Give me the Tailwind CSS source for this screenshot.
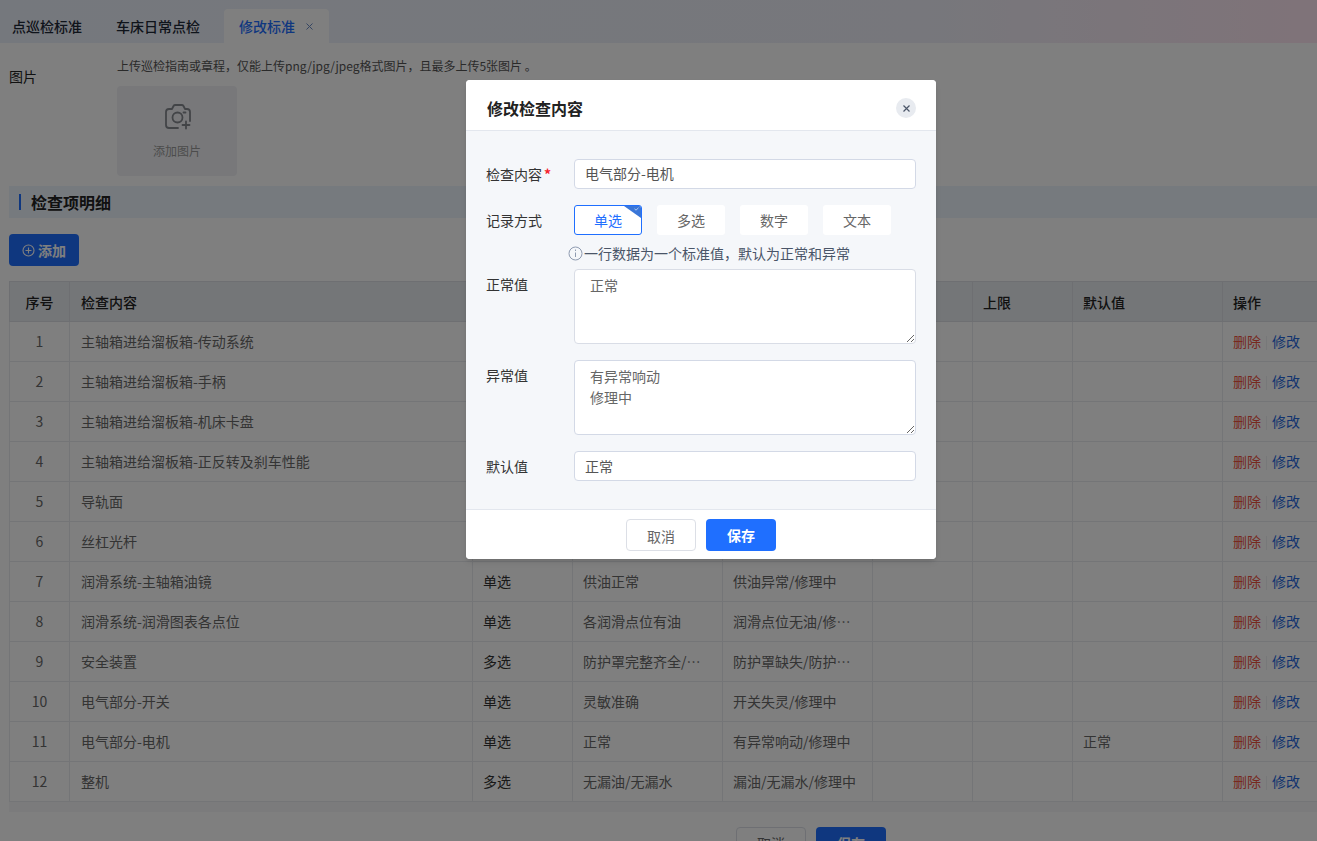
<!DOCTYPE html>
<html lang="zh">
<head>
<meta charset="utf-8">
<title>修改标准</title>
<script src="https://cdn.jsdelivr.net/npm/@tailwindcss/browser@4"></script>
</head>
<body class="h-[841px] overflow-hidden bg-white font-['Noto_Sans_CJK_SC','Noto_Sans',sans-serif] text-[14px] text-[#333]">
<div class="relative h-[841px] w-[1317px] overflow-hidden">
  <!-- tabs -->
  <div class="flex h-[43px] items-end bg-gradient-to-r from-[#ebf1fb] via-[#eeeff8] via-70% to-[#ffe6f2] pl-3">
    <div class="flex h-[34px] w-[104px] items-center font-medium text-[#1f2937]">点巡检标准</div>
    <div class="flex h-[34px] w-[108px] items-center font-medium text-[#1f2937]">车床日常点检</div>
    <div class="flex h-[34px] w-[105px] items-center rounded-t bg-white pl-[15px] font-medium text-[#1f6fff]">修改标准<svg class="ml-[11px] mt-[1px]" width="7" height="7" viewBox="0 0 7 7" stroke="#6b8ac4" stroke-width="1"><path d="M.5.5l6 6M6.500.5l-6 6"/></svg></div>
  </div>
  <!-- form -->
  <div class="pl-[9px]">
    <div class="flex h-[143px]">
      <div class="w-[108px] pt-[22px] leading-[22px] text-[#222]">图片</div>
      <div class="pt-[14px]">
        <div class="text-[12px] leading-[18px] text-[#555]">上传巡检指南或章程，仅能上传png/jpg/jpeg格式图片，且最多上传5张图片 。</div>
        <div class="mt-[11px] flex h-[90px] w-[120px] flex-col items-center rounded-sm bg-[#f0f1f5] pt-[16px] text-[12px] text-[#999]">
          <svg width="28" height="28" viewBox="0 0 28 28" fill="none" stroke="#85888f" stroke-width="1.800" stroke-linecap="round" stroke-linejoin="round"><path d="M15 26H6A3 3 0 0 1 3 23V10a3 3 0 0 1 3-3h3l1.500-3a2 2 0 0 1 1.800-1h6.400a2 2 0 0 1 1.800 1L22 7h2a3 3 0 0 1 3 3v9"/><circle cx="14.500" cy="15.500" r="5"/><path d="M23 19.500v7M19.500 23h7M20.500 10.500h2"/></svg>
          <span class="mt-[12px] leading-[18px]">添加图片</span>
        </div>
      </div>
    </div>
    <div class="flex h-[32px] items-center bg-[#edf4fd] pl-[10px]">
      <span class="h-[16px] w-[2px] bg-[#1f6fff]"></span>
      <span class="ml-[10px] text-[16px] font-bold text-[#222]">检查项明细</span>
    </div>
    <div class="mt-[16px] flex h-[32px] w-[70px] items-center justify-center gap-[3px] rounded bg-[#1f6fff] font-bold text-white">
      <svg width="13" height="13" viewBox="0 0 13 13" fill="none" stroke="#fff" stroke-width="1.100"><circle cx="6.500" cy="6.500" r="5.500"/><path d="M6.500 3.500v6M3.500 6.500h6"/></svg>
      <span>添加</span>
    </div>
    <!-- table -->
    <table class="mt-[15px] w-[1310px] table-fixed border-collapse text-[#686868]">
      <colgroup><col class="w-[60px]"><col class="w-[403px]"><col class="w-[100px]"><col class="w-[150px]"><col class="w-[150px]"><col class="w-[100px]"><col class="w-[100px]"><col class="w-[150px]"><col class="w-[97px]"></colgroup>
      <thead>
        <tr class="h-[40px] bg-[#e8ecf0] text-left font-medium text-[#222] [&>th]:border [&>th]:border-[#dcdfe5] [&>th]:px-[10px] [&>th]:pt-[2px] [&>th]:font-medium [&>th:nth-child(2)]:pl-[11px]">
          <th class="!text-center">序号</th><th>检查内容</th><th>记录方式</th><th>正常值</th><th>异常值</th><th>下限</th><th>上限</th><th>默认值</th><th>操作</th>
        </tr>
      </thead>
      <tbody class="[&_td]:h-[40px] [&_td]:border [&_td]:border-[#e8eaee] [&_td]:px-[10px] [&_td]:whitespace-nowrap [&_td]:overflow-hidden [&_td:nth-child(2)]:pl-[11px]">
        <tr><td class="text-center">1</td><td>主轴箱进给溜板箱-传动系统</td><td></td><td></td><td></td><td></td><td></td><td></td><td><span class="text-[#f0503f]">删除</span><span class="mx-[5px] inline-block h-[14px] w-px bg-[#eef0f3] align-middle"></span><span class="text-[#2468e0]">修改</span></td></tr>
        <tr><td class="text-center">2</td><td>主轴箱进给溜板箱-手柄</td><td></td><td></td><td></td><td></td><td></td><td></td><td><span class="text-[#f0503f]">删除</span><span class="mx-[5px] inline-block h-[14px] w-px bg-[#eef0f3] align-middle"></span><span class="text-[#2468e0]">修改</span></td></tr>
        <tr><td class="text-center">3</td><td>主轴箱进给溜板箱-机床卡盘</td><td></td><td></td><td></td><td></td><td></td><td></td><td><span class="text-[#f0503f]">删除</span><span class="mx-[5px] inline-block h-[14px] w-px bg-[#eef0f3] align-middle"></span><span class="text-[#2468e0]">修改</span></td></tr>
        <tr><td class="text-center">4</td><td>主轴箱进给溜板箱-正反转及刹车性能</td><td></td><td></td><td></td><td></td><td></td><td></td><td><span class="text-[#f0503f]">删除</span><span class="mx-[5px] inline-block h-[14px] w-px bg-[#eef0f3] align-middle"></span><span class="text-[#2468e0]">修改</span></td></tr>
        <tr><td class="text-center">5</td><td>导轨面</td><td></td><td></td><td></td><td></td><td></td><td></td><td><span class="text-[#f0503f]">删除</span><span class="mx-[5px] inline-block h-[14px] w-px bg-[#eef0f3] align-middle"></span><span class="text-[#2468e0]">修改</span></td></tr>
        <tr><td class="text-center">6</td><td>丝杠光杆</td><td></td><td></td><td></td><td></td><td></td><td></td><td><span class="text-[#f0503f]">删除</span><span class="mx-[5px] inline-block h-[14px] w-px bg-[#eef0f3] align-middle"></span><span class="text-[#2468e0]">修改</span></td></tr>
        <tr><td class="text-center">7</td><td>润滑系统-主轴箱油镜</td><td class="text-[#333]">单选</td><td>供油正常</td><td>供油异常/修理中</td><td></td><td></td><td></td><td><span class="text-[#f0503f]">删除</span><span class="mx-[5px] inline-block h-[14px] w-px bg-[#eef0f3] align-middle"></span><span class="text-[#2468e0]">修改</span></td></tr>
        <tr><td class="text-center">8</td><td>润滑系统-润滑图表各点位</td><td class="text-[#333]">单选</td><td>各润滑点位有油</td><td>润滑点位无油/修…</td><td></td><td></td><td></td><td><span class="text-[#f0503f]">删除</span><span class="mx-[5px] inline-block h-[14px] w-px bg-[#eef0f3] align-middle"></span><span class="text-[#2468e0]">修改</span></td></tr>
        <tr><td class="text-center">9</td><td>安全装置</td><td class="text-[#333]">多选</td><td>防护罩完整齐全/…</td><td>防护罩缺失/防护…</td><td></td><td></td><td></td><td><span class="text-[#f0503f]">删除</span><span class="mx-[5px] inline-block h-[14px] w-px bg-[#eef0f3] align-middle"></span><span class="text-[#2468e0]">修改</span></td></tr>
        <tr><td class="text-center">10</td><td>电气部分-开关</td><td class="text-[#333]">单选</td><td>灵敏准确</td><td>开关失灵/修理中</td><td></td><td></td><td></td><td><span class="text-[#f0503f]">删除</span><span class="mx-[5px] inline-block h-[14px] w-px bg-[#eef0f3] align-middle"></span><span class="text-[#2468e0]">修改</span></td></tr>
        <tr><td class="text-center">11</td><td>电气部分-电机</td><td class="text-[#333]">单选</td><td>正常</td><td>有异常响动/修理中</td><td></td><td></td><td>正常</td><td><span class="text-[#f0503f]">删除</span><span class="mx-[5px] inline-block h-[14px] w-px bg-[#eef0f3] align-middle"></span><span class="text-[#2468e0]">修改</span></td></tr>
        <tr><td class="text-center">12</td><td>整机</td><td class="text-[#333]">多选</td><td>无漏油/无漏水</td><td>漏油/无漏水/修理中</td><td></td><td></td><td></td><td><span class="text-[#f0503f]">删除</span><span class="mx-[5px] inline-block h-[14px] w-px bg-[#eef0f3] align-middle"></span><span class="text-[#2468e0]">修改</span></td></tr>
      </tbody>
    </table>
    <div class="h-[10px] bg-[#f6f6f9]"></div>
    <div class="ml-[727px] mt-[15px] flex gap-[10px]">
      <div class="flex h-[32px] w-[70px] items-center justify-center rounded-sm border border-[#dcdfe6] text-[#666]">取消</div>
      <div class="flex h-[32px] w-[70px] items-center justify-center rounded-sm bg-[#1f6fff] font-bold text-white">保存</div>
    </div>
  </div>

  <!-- overlay -->
  <div class="absolute inset-0 bg-black/50"></div>

  <!-- modal -->
  <div class="absolute left-[466px] top-[80px] flex h-[479px] w-[470px] flex-col overflow-hidden rounded bg-[#f5f7fa] shadow-md">
    <div class="flex h-[51px] shrink-0 items-center justify-between border-b border-[#e3e7ee] bg-white pl-[21px] pr-[20px] pt-[6px]">
      <span class="text-[16px] font-bold text-[#222]">修改检查内容</span>
      <span class="flex h-[20px] w-[20px] items-center justify-center rounded-full bg-[#e8ebf0]">
        <svg width="7" height="7" viewBox="0 0 7 7" stroke="#4a5568" stroke-width="1.200"><path d="M.5.5l6 6M6.500.5l-6 6"/></svg>
      </span>
    </div>
    <div class="flex-1 pl-[20px] pr-[20px] pt-[28px]">
      <div class="flex h-[30px] items-center">
        <label class="w-[88px] text-[#333]">检查内容<span class="ml-[2px] font-bold text-[#f5222d]">*</span></label>
        <div class="flex h-[30px] flex-1 items-center rounded border border-[#d3d9e6] bg-white px-[10px] pb-[2px] text-[#555]">电气部分-电机</div>
      </div>
      <div class="mt-[16px] flex h-[30px] items-center">
        <label class="w-[88px] text-[#333]">记录方式</label>
        <div class="flex gap-[15px] text-[#666]">
          <div class="relative flex h-[30px] w-[68px] items-center justify-center overflow-hidden rounded-[3px] border border-[#1f6fff] bg-white text-[#1f6fff]">单选
            <svg class="absolute right-0 top-0" width="17" height="12" viewBox="0 0 17 12"><path d="M0 0h17v12z" fill="#3a76d8"/><path d="M10.500 2.800l1.500 1.400 2.500-2.400" fill="none" stroke="#cfe0fb" stroke-width=".8"/></svg>
          </div>
          <div class="flex h-[30px] w-[68px] items-center justify-center rounded-[3px] bg-white">多选</div>
          <div class="flex h-[30px] w-[68px] items-center justify-center rounded-[3px] bg-white">数字</div>
          <div class="flex h-[30px] w-[68px] items-center justify-center rounded-[3px] bg-white">文本</div>
        </div>
      </div>
      <div class="ml-[82px] mt-[8px] flex h-[20px] items-center gap-[1px] text-[#4a5568]">
        <svg width="15" height="15" viewBox="0 0 15 15" fill="none" stroke="#8f9bb0"><circle cx="7.500" cy="7.500" r="6.500"/><path d="M7.500 6.500v4.500M7.500 3.500v1.500"/></svg>
        <span>一行数据为一个标准值，默认为正常和异常</span>
      </div>
      <div class="mt-[6px] flex">
        <label class="w-[88px] pt-[5px] leading-[20px] text-[#333]">正常值</label>
        <textarea class="h-[75px] flex-1 rounded-sm border border-[#d9dde6] bg-white px-[15px] py-[5px] leading-[21px] text-[#666]">正常</textarea>
      </div>
      <div class="mt-[16px] flex">
        <label class="w-[88px] pt-[5px] leading-[20px] text-[#333]">异常值</label>
        <textarea class="h-[75px] flex-1 rounded-sm border border-[#d3d9e6] bg-white px-[15px] py-[5px] leading-[21px] text-[#666]">有异常响动
修理中</textarea>
      </div>
      <div class="mt-[16px] flex h-[30px] items-center">
        <label class="w-[88px] text-[#333]">默认值</label>
        <div class="flex h-[30px] flex-1 items-center rounded border border-[#d3d9e6] bg-white px-[10px] text-[#555]">正常</div>
      </div>
    </div>
    <div class="flex h-[50px] shrink-0 items-start justify-center gap-[10px] border-t border-[#e3e7ee] bg-white pt-[9px]">
      <div class="flex h-[32px] w-[70px] items-center justify-center rounded-sm border border-[#dcdfe6] pt-[2px] text-[#666]">取消</div>
      <div class="flex h-[32px] w-[70px] items-center justify-center rounded-sm bg-[#1f6fff] font-bold text-white">保存</div>
    </div>
  </div>
</div>
</body>
</html>
